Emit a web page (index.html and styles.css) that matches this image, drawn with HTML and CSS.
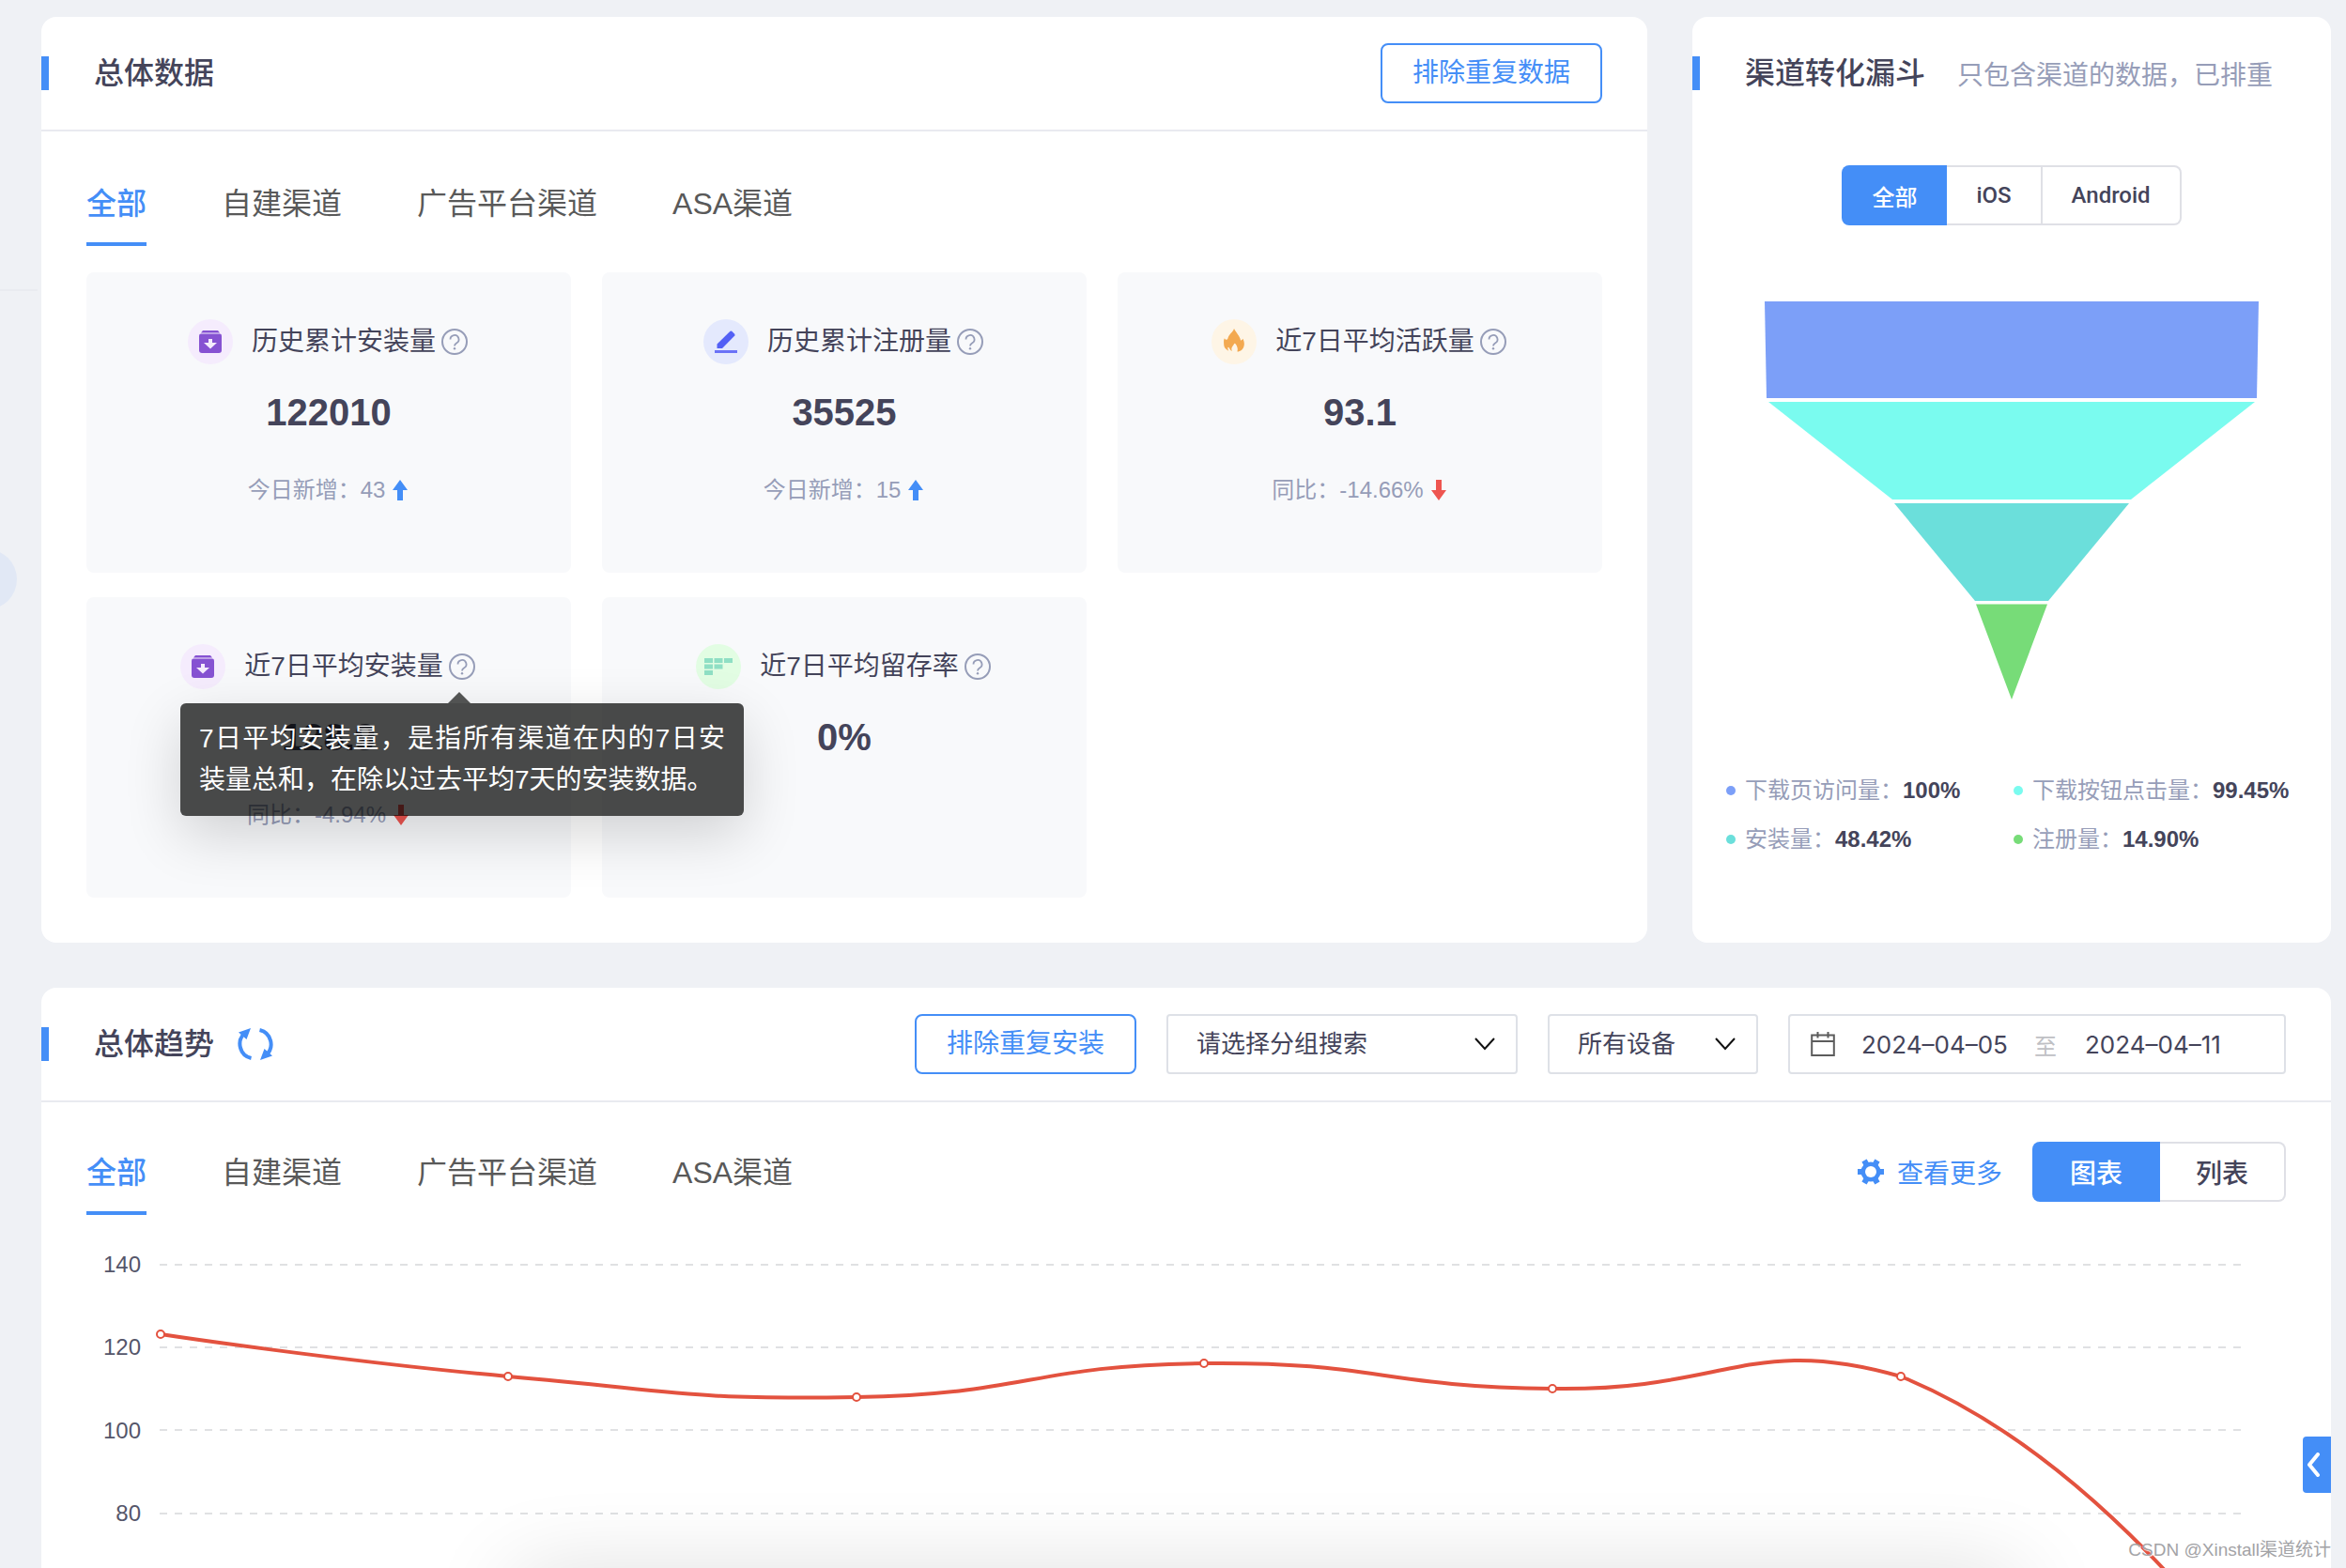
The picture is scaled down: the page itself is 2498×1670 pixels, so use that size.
FILE: index.html
```html
<!DOCTYPE html>
<html lang="zh-CN">
<head>
<meta charset="utf-8">
<meta name="viewport" content="width=device-width, initial-scale=1">
<title>渠道统计</title>
<link rel="stylesheet" href="styles.css">
</head>
<body>
<svg class="sprite" aria-hidden="true">
  <symbol id="i-box" viewBox="0 0 24 24"><path d="M4 0h16l2 2.500H2z" fill="#8652d2"/><path d="M0 5.500Q0 3.500 2 3.500h20q2 0 2 2V21q0 3-3 3H3q-3 0-3-3z" fill="#8652d2"/><path d="M10 9h4v4h5l-7 6.500L5 13h5z" fill="#f5ecfd"/></symbol>
  <symbol id="i-help" viewBox="0 0 28 28"><circle cx="14" cy="14" r="13" fill="none" stroke="#969db8" stroke-width="2"/><path d="M9.500 11.500a4.500 4.500 0 1 1 6.800 3.800c-1.600 1-2.300 1.500-2.300 3.200" fill="none" stroke="#969db8" stroke-width="1.800"/><circle cx="14" cy="21.300" r="1.200" fill="#969db8"/></symbol>
  <symbol id="i-up" viewBox="0 0 16 22"><path d="M8 0l8 11h-5v11H5V11H0z" fill="#448ef7"/></symbol>
  <symbol id="i-down" viewBox="0 0 16 22"><path d="M8 22l8-11h-5V0H5v11H0z" fill="#ee5550"/></symbol>
</svg>
<div class="page">
  <div class="rail-line"></div>
  <div class="rail-dot"></div>
  <main class="layout">
    <section class="card overview">
      <header class="card-head">
        <h2>总体数据</h2>
        <button class="btn" type="button">排除重复数据</button>
      </header>
      <nav class="tabs">
        <a class="tab active" href="#all">全部</a>
        <a class="tab" href="#self">自建渠道</a>
        <a class="tab" href="#ads">广告平台渠道</a>
        <a class="tab" href="#asa">ASA渠道</a>
      </nav>
      <div class="stats">
        <article class="stat">
          <div class="stat-label"><span class="badge violet"><svg width="24" height="24"><use href="#i-box"/></svg></span><span>历史累计安装量</span><button class="help" type="button" aria-label="说明"><svg width="28" height="28"><use href="#i-help"/></svg></button></div>
          <div class="stat-value">122010</div>
          <div class="stat-sub">今日新增：43<svg width="16" height="22"><use href="#i-up"/></svg></div>
        </article>
        <article class="stat">
          <div class="stat-label"><span class="badge blue"><svg width="24" height="24" viewBox="0 0 24 24"><path d="M2.500 14.500L16.500 .8l1.500-.3L21.500 4l-.2 1.500L8 19H2.500z" fill="#5360f5"/><path d="M0 21h24v3H0z" fill="#6a72f7"/></svg></span><span>历史累计注册量</span><button class="help" type="button" aria-label="说明"><svg width="28" height="28"><use href="#i-help"/></svg></button></div>
          <div class="stat-value">35525</div>
          <div class="stat-sub">今日新增：15<svg width="16" height="22"><use href="#i-up"/></svg></div>
        </article>
        <article class="stat">
          <div class="stat-label"><span class="badge amber"><svg width="22" height="28" viewBox="0 0 22 28"><path d="M11 0C12.500 3.500 17.500 8 18 12.500c.8 0 1.800-.6 2.500-1.800C21.500 13 22 15 21.800 17c-.2 3.500-2.400 6.500-6.300 7.600-.9.2-1.200-.3-.9-1.100C15.300 21 14 18 12.300 16c-.5-.6-1-.4-1.200.2C10.300 18 8.500 19 8.300 21.500c0 1 .3 1.900.7 2.500-1.200-.3-2.200-1.500-3.200-3.500-.7-1.200-1.500-1-1.500.3 0 1.100.4 2 .9 2.900C1.800 22 .2 20 .2 17 .1 14.500-.3 12 1 10.300c.3 1 1 1.600 2 1.500C4 11.700 4.300 11 4.600 9.800 5.500 6 10 3.500 11 0z" fill="#f3a950"/></svg></span><span>近7日平均活跃量</span><button class="help" type="button" aria-label="说明"><svg width="28" height="28"><use href="#i-help"/></svg></button></div>
          <div class="stat-value">93.1</div>
          <div class="stat-sub">同比：-14.66%<svg width="16" height="22"><use href="#i-down"/></svg></div>
        </article>
        <article class="stat">
          <div class="stat-label"><span class="badge violet"><svg width="24" height="24"><use href="#i-box"/></svg></span><span>近7日平均安装量</span><button class="help" type="button" aria-label="说明" aria-describedby="tip"><svg width="28" height="28"><use href="#i-help"/></svg></button></div>
          <div class="stat-value">128.9</div>
          <div class="stat-sub">同比：-4.94%<svg width="16" height="22"><use href="#i-down"/></svg></div>
          <div class="tooltip" id="tip" role="tooltip">7日平均安装量，是指所有渠道在内的7日安装量总和，在除以过去平均7天的安装数据。</div>
        </article>
        <article class="stat">
          <div class="stat-label"><span class="badge green"><svg width="30" height="18" viewBox="0 0 30 18"><path d="M0 0h9v5H0zM10.500 0h9v5h-9zM21 0h9v5h-9zM0 6.500h9v5H0zM10.500 6.500h9v5h-9zM0 13h9v5H0z" fill="#8fdfc4"/></svg></span><span>近7日平均留存率</span><button class="help" type="button" aria-label="说明"><svg width="28" height="28"><use href="#i-help"/></svg></button></div>
          <div class="stat-value">0%</div>
        </article>
      </div>
    </section>

    <section class="card funnel">
      <header class="card-head plain">
        <h2>渠道转化漏斗</h2>
        <span class="hint">只包含渠道的数据，已排重</span>
      </header>
      <div class="segment small">
        <button class="on" type="button">全部</button><button type="button">iOS</button><button type="button">Android</button>
      </div>
      <svg class="funnel-chart" viewBox="0 0 526 424" role="img" aria-label="渠道转化漏斗">
        <path d="M0 0h526l-2 103H2z" fill="#7c9ff8"/>
        <path d="M4 107h518L390 211H136z" fill="#7afbef"/>
        <path d="M138 215h250l-86 104h-78z" fill="#6bdfdb"/>
        <path d="M225 322.500h76L263 424z" fill="#77dc78"/>
      </svg>
      <ul class="legend">
        <li><i class="dot c1"></i>下载页访问量：<b>100%</b></li>
        <li><i class="dot c2"></i>下载按钮点击量：<b>99.45%</b></li>
        <li><i class="dot c3"></i>安装量：<b>48.42%</b></li>
        <li><i class="dot c4"></i>注册量：<b>14.90%</b></li>
      </ul>
    </section>

    <section class="card trend">
      <header class="card-head">
        <h2>总体趋势</h2>
        <button class="refresh" type="button" aria-label="刷新"><svg width="38" height="36" viewBox="0 0 38 36"><g fill="none" stroke="#448ef7" stroke-width="4"><path d="M14.500 33A15.500 15.500 0 0 1 8 6"/><path d="M23.500 3A15.500 15.500 0 0 1 30 30"/></g><path d="M1 5.500L14 1l-4.500 12zM37 30.500L24 35l4.500-12z" fill="#448ef7"/></svg></button>
        <div class="filters">
          <button class="btn" type="button">排除重复安装</button>
          <select class="field group" aria-label="分组"><option>请选择分组搜索</option></select>
          <select class="field device" aria-label="设备"><option>所有设备</option></select>
          <div class="field range">
            <svg width="26" height="28" viewBox="0 0 26 28"><path d="M1.200 4.500h23.600v21.500H1.200zM1.200 11h23.600M7.500 1v6.500M18.500 1v6.500" fill="none" stroke="#5c5c5c" stroke-width="2"/></svg>
            <input type="text" aria-label="开始日期" value="2024–04–05"><span class="to">至</span><input type="text" aria-label="结束日期" value="2024–04–11">
          </div>
        </div>
      </header>
      <div class="trend-bar">
        <nav class="tabs">
          <a class="tab active" href="#t-all">全部</a>
          <a class="tab" href="#t-self">自建渠道</a>
          <a class="tab" href="#t-ads">广告平台渠道</a>
          <a class="tab" href="#t-asa">ASA渠道</a>
        </nav>
        <a class="more" href="#more"><svg width="28" height="28" viewBox="-14 -14 28 28"><g fill="#448ef7"><circle r="10.500"/><path d="M-14-3h5v6h-5zM14-3H9v6h5z"/><path d="M-14-3h5v6h-5zM14-3H9v6h5z" transform="rotate(60)"/><path d="M-14-3h5v6h-5zM14-3H9v6h5z" transform="rotate(120)"/></g><circle r="6" fill="#fff"/></svg>查看更多</a>
        <div class="segment">
          <button class="on" type="button">图表</button><button type="button">列表</button>
        </div>
      </div>
      <svg class="line-chart" viewBox="0 0 2342 370" role="img" aria-label="总体趋势图">
        <g stroke="#e0e1e3" stroke-width="2" stroke-dasharray="8 8">
          <path d="M78 53H2295M78 141H2295M78 229H2295M78 318H2295"/>
        </g>
        <g class="axis"><text x="58" y="61">140</text><text x="58" y="149">120</text><text x="58" y="238">100</text><text x="58" y="326">80</text></g>
        <path d="M79 127C79 127 264 155 449 172C634 188 635 197 820 194C1005 191 1005 160 1190 158C1375 156 1376 183 1561 185C1746 188 1771 126 1932 172C2142 257 2302 485 2302 485" fill="none" stroke="#e3523f" stroke-width="4"/>
        <g fill="#fff" stroke="#e3523f" stroke-width="2"><circle cx="79" cy="127" r="4"/><circle cx="449" cy="172" r="4"/><circle cx="820" cy="194" r="4"/><circle cx="1190" cy="158" r="4"/><circle cx="1561" cy="185" r="4"/><circle cx="1932" cy="172" r="4"/></g>
      </svg>
    </section>
  </main>
  <div class="dock-shadow"></div>
  <button class="drawer" type="button" aria-label="展开"><svg width="16" height="26" viewBox="0 0 16 26"><path d="M13 2L4 13l9 11" fill="none" stroke="#fff" stroke-width="4" stroke-linecap="round" stroke-linejoin="round"/></svg></button>
  <div class="watermark">CSDN @Xinstall渠道统计</div>
</div>
</body>
</html>
```
FILE: styles.css
```css
* { box-sizing: border-box; }

body {
  margin: 0;
  background: #eff1f5;
  color: #44445a;
  font-family: "Liberation Sans", "Noto Sans CJK SC", sans-serif;
  font-size: 28px;
}

button, input, select { font: inherit; color: inherit; }
button { cursor: pointer; padding: 0; border: 0; background: none; }
a { text-decoration: none; }
h2 { margin: 0; font-size: 32px; font-weight: 500; line-height: 48px; }
svg { display: block; flex: none; }
.sprite { position: absolute; width: 0; height: 0; }

.page {
  position: relative;
  display: flex;
  min-height: 100vh;
  overflow: hidden;
}

.layout {
  flex: 1;
  display: grid;
  grid-template-columns: minmax(0, 1fr) 680px;
  grid-template-rows: auto 1fr;
  gap: 48px;
  padding: 18px 16px 0 44px;
}

.card { background: #fff; border-radius: 16px; }

.card-head {
  position: relative;
  display: flex;
  align-items: center;
  height: 122px;
  padding: 0 48px 0 56px;
  border-bottom: 2px solid #e9eaf0;
}
.card-head::before {
  content: "";
  position: absolute;
  left: 0;
  top: 42px;
  width: 8px;
  height: 36px;
  background: #448ef7;
}
.card-head.plain { border-color: transparent; }
.overview .btn { margin-left: auto; }

.btn {
  height: 64px;
  padding: 0 32px;
  border: 2px solid #448ef7;
  border-radius: 8px;
  background: #fff;
  color: #448ef7;
  line-height: 58px;
}

.tabs { display: flex; gap: 80px; }
.tab {
  padding: 53px 0 17px;
  border-bottom: 4px solid transparent;
  color: #595959;
  font-size: 32px;
  line-height: 48px;
}
.tab.active { color: #448ef7; border-color: #448ef7; font-weight: 500; }
.overview .tabs { padding: 0 48px; }

.stats {
  display: grid;
  grid-template-columns: repeat(3, minmax(0, 1fr));
  gap: 26px 33px;
  padding: 28px 48px 48px;
}
.stat {
  position: relative;
  height: 320px;
  padding-top: 50px;
  border-radius: 8px;
  background: #f8f9fb;
}
.stat-label {
  display: flex;
  justify-content: center;
  align-items: center;
  height: 48px;
  padding-right: 2px;
  line-height: 40px;
}
.badge {
  display: grid;
  place-items: center;
  width: 48px;
  height: 48px;
  margin-right: 20px;
  border-radius: 50%;
}
.violet { background: #f5ecfd; }
.blue { background: #e4e9fd; }
.amber { background: #fef5e6; }
.green { background: #e2fde3; }
.help { margin-left: 6px; }
.stat-value {
  margin-top: 26px;
  font-size: 40px;
  font-weight: 700;
  line-height: 50px;
  text-align: center;
}
.stat-sub {
  display: flex;
  justify-content: center;
  align-items: center;
  gap: 8px;
  margin-top: 40px;
  padding-right: 2px;
  color: #969db8;
  font-size: 24px;
  line-height: 36px;
}

.tooltip {
  position: absolute;
  z-index: 2;
  left: 100px;
  top: 113px;
  width: 600px;
  padding: 16px 20px;
  border-radius: 6px;
  background: rgba(0, 2, 0, .71);
  box-shadow: 0 20px 60px rgba(0, 0, 0, .16);
  color: #fff;
  line-height: 44px;
  text-align: justify;
}
.tooltip::before {
  content: "";
  position: absolute;
  left: 285px;
  top: -12px;
  border: solid transparent;
  border-width: 0 12px 12px;
  border-bottom-color: rgba(0, 2, 0, .66);
}

.hint { margin-left: 34px; color: #969db8; white-space: nowrap; }
.funnel .card-head { padding-right: 0; }

.segment { display: flex; height: 64px; }
.segment button {
  padding: 0 38px;
  border: 2px solid #dfe0e6;
  border-left: 0;
  background: #fff;
  font-weight: 500;
}
.segment button:first-child { border-radius: 8px 0 0 8px; }
.segment button:last-child { border-radius: 0 8px 8px 0; }
.segment .on { padding: 0 40px; border: 0; background: #448ef7; color: #fff; }
.segment.small { justify-content: center; margin-top: 36px; font-size: 24px; font-family: Roboto, "Noto Sans CJK SC", sans-serif; }
.segment.small button { padding: 0 31px; }
.segment.small .on { padding: 0 32px; }

.funnel-chart { width: 526px; margin: 81px auto 0; }

.legend {
  display: grid;
  grid-template-columns: 306px 1fr;
  row-gap: 16px;
  margin: 79px 0 0;
  padding: 0 0 0 36px;
  list-style: none;
  color: #969db8;
  font-size: 24px;
  line-height: 36px;
  white-space: nowrap;
}
.legend li { display: flex; align-items: center; }
.legend b { color: #44445a; }
.dot { width: 10px; height: 10px; margin-right: 10px; border-radius: 50%; }
.c1 { background: #7c9ff8; }
.c2 { background: #7afbef; }
.c3 { background: #6bdfdb; }
.c4 { background: #77dc78; }

.trend { grid-column: 1 / -1; border-radius: 16px 16px 0 0; }
.refresh { margin-left: 25px; }
.filters { display: flex; gap: 32px; margin-left: auto; }
.field {
  height: 64px;
  border: 2px solid #dee1e7;
  border-radius: 4px;
  background: #fff;
  font-size: 26px;
}
select.field {
  appearance: none;
  padding: 0 30px;
  background: #fff url("data:image/svg+xml,%3Csvg xmlns='http://www.w3.org/2000/svg' width='24' height='14'%3E%3Cpath d='M2 1l10 11L22 1' fill='none' stroke='%23111' stroke-width='2'/%3E%3C/svg%3E") no-repeat right 21px center;
}
.group { width: 374px; }
.device { width: 224px; }
.range { display: flex; align-items: center; width: 530px; padding-left: 22px; }
.range input {
  width: 166px;
  padding: 0;
  border: 0;
  outline: 0;
  font-family: Inter, sans-serif;
  font-size: 26px;
}
.range svg { margin-right: 28px; }
.to { margin: 0 30px 0 18px; color: #bfc0c4; font-size: 24px; }

.trend-bar { display: flex; align-items: center; padding: 0 48px; }
.trend-bar .tab { padding-top: 51px; }
.more {
  display: flex;
  align-items: center;
  gap: 14px;
  margin: 28px 32px 0 auto;
  color: #448ef7;
}
.trend-bar .segment { margin-top: 28px; }

.line-chart { width: calc(100% - 96px); margin: 0 48px; overflow: visible; }
.axis { fill: #55566a; font-size: 24px; text-anchor: end; }

.rail-line { position: absolute; top: 308px; left: 0; width: 40px; height: 2px; background: #e9ebf0; }
.rail-dot { position: absolute; top: 585px; left: -46px; width: 64px; height: 64px; border-radius: 50%; background: #e1e8f5; }

.dock-shadow {
  position: absolute;
  bottom: -80px;
  left: 22%;
  right: 14%;
  height: 70px;
  box-shadow: 0 0 96px rgba(0, 0, 0, .16);
}
.drawer {
  position: absolute;
  right: 16px;
  bottom: 80px;
  display: grid;
  place-items: center start;
  width: 30px;
  height: 60px;
  padding-left: 3px;
  border-radius: 4px 0 0 4px;
  background: #448ef7;
}
.watermark {
  position: absolute;
  right: 16px;
  bottom: 5px;
  color: #a3a3a6;
  font-size: 19px;
  line-height: 28px;
  text-shadow: 1px 1px 1px #fff;
}
```
